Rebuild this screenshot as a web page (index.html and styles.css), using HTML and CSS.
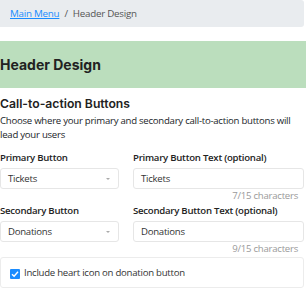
FILE: index.html
```html
<!DOCTYPE html>
<html>
  <head>
    <title>Header Design</title>
    <link rel="stylesheet" href="styles.css">
  </head>
  <body>
    <!-- breadcrumb trail back to the menu -->
    <div class="crumbs">
      <a href="#">Main Menu</a>
      <span class="sep">/</span>
      <span class="here">Header Design</span>
    </div>

    <div class="banner">Header Design</div>

    <div class="section">
      <h2>Call-to-action Buttons</h2>
      <p class="help">Choose where your primary and secondary call-to-action buttons will lead your users</p>

      <div class="row">
        <div class="field narrow">
          <label>Primary Button</label>
          <div class="select">Tickets<span class="caret"></span></div>
        </div>
        <div class="field wide">
          <label>Primary Button Text (optional)</label>
          <div class="input">Tickets</div>
          <div class="count">7/15 characters</div>
        </div>
      </div>

      <div class="row second">
        <div class="field narrow">
          <label>Secondary Button</label>
          <div class="select">Donations<span class="caret"></span></div>
        </div>
        <div class="field wide">
          <label>Secondary Button Text (optional)</label>
          <div class="input">Donations</div>
          <div class="count">9/15 characters</div>
        </div>
      </div>

      <div class="check-card">
        <span class="box">
          <svg width="10" height="10" viewBox="0 0 10 10"><path d="M2 5.2 L4.1 7.2 L8 2.8" fill="none" stroke="#fff" stroke-width="1.4"/></svg>
        </span>
        Include heart icon on donation button
      </div>
    </div>
  </body>
</html>
```

FILE: styles.css
```css
body {
  margin: 0;
  font-family: "Open Sans", sans-serif;
  color: #212529;
  font-size: 9.6px;
  letter-spacing: -0.25px;
}

.crumbs {
  width: 294px;
  height: 27px;
  padding-left: 10px;
  background-color: #e9ecef;
  border-radius: 0 3px 3px 0;
  display: flex;
  align-items: center;
  font-size: 9.8px;
  color: #555;
}

.crumbs a {
  color: #1a8cff;
}

.crumbs .sep {
  margin: 0 5px;
}

.banner {
  margin-top: 14px;
  height: 47px;
  background-color: #bbdebd;
  display: flex;
  align-items: center;
  font-family: Inter, sans-serif;
  font-weight: 700;
  font-size: 14px;
  letter-spacing: 0;
  color: #222;
}

.section {
  width: 304px;
  padding-top: 8px;
}

h2 {
  margin: 0;
  font-family: Inter, sans-serif;
  font-weight: 600;
  font-size: 12.2px;
  line-height: 16px;
  letter-spacing: 0;
  color: #222;
}

.help {
  margin: 2px 0 0;
  line-height: 14px;
}

.row {
  display: flex;
  gap: 14px;
  margin-top: 9px;
}

.row.second {
  margin-top: 1px;
}

.field label {
  display: block;
  font-weight: 600;
  line-height: 14px;
  color: #222;
}

.narrow {
  width: 119px;
}

.wide {
  flex: 1;
}

.select, .input {
  margin-top: 3px;
  height: 19px;
  border: 1px solid #e6e6e6;
  border-radius: 3px;
  display: flex;
  align-items: center;
  padding-left: 7px;
  color: #333;
}

.select {
  justify-content: space-between;
  padding-right: 8px;
}

.caret {
  width: 0;
  height: 0;
  border-left: 2.5px solid transparent;
  border-right: 2.5px solid transparent;
  border-top: 2.5px solid #aaa;
}

.count {
  text-align: right;
  color: #9a9a9a;
  line-height: 14px;
  padding-right: 6px;
}

.check-card {
  margin-top: 1px;
  height: 29px;
  border: 1px solid #ececec;
  border-radius: 3px;
  display: flex;
  align-items: center;
  padding-left: 9px;
  color: #333;
}

.box {
  width: 10px;
  height: 10px;
  margin-right: 4px;
  margin-top: 2px;
  background-color: #1a8cff;
  border-radius: 1px;
  display: flex;
}
```
